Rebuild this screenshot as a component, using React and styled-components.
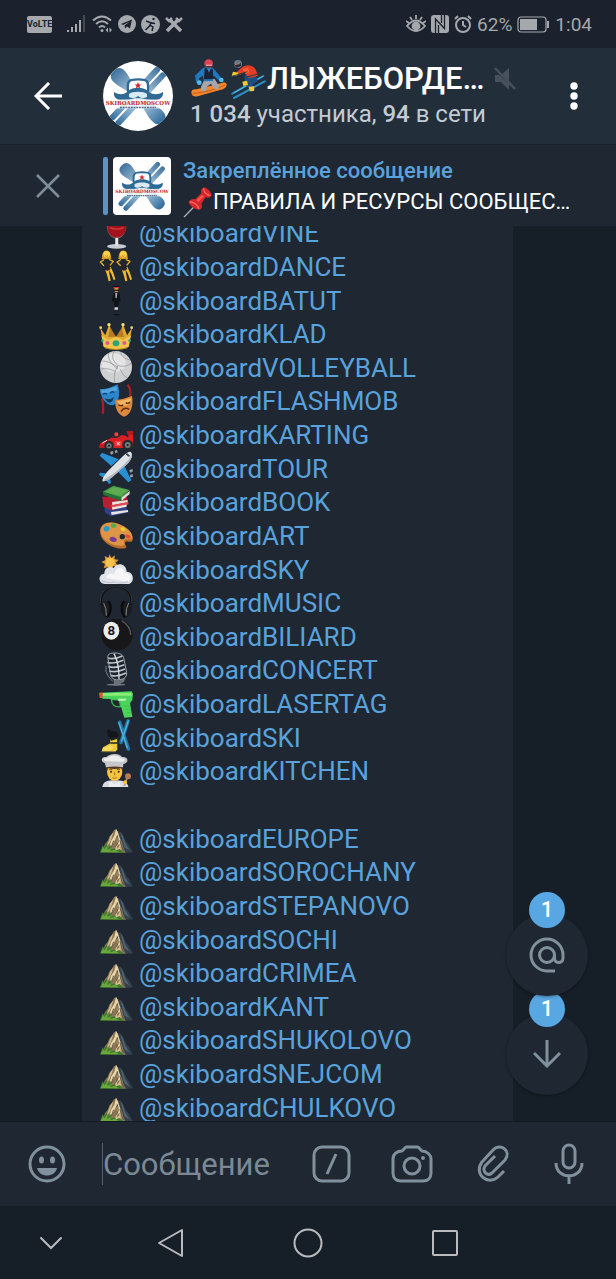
import styled, { createGlobalStyle, ThemeProvider } from "styled-components";

const theme = {
  colors: {
    status: "#1b222e",
    header: "#232e3b",
    panel: "#1e2732",
    bg: "#161e27",
    link: "#5aa2dc",
    badge: "#59a7e2",
    icon: "#80909c",
    system: "#a5a8ad",
    white: "#ffffff",
  },
};

const GlobalStyle = createGlobalStyle`
  * {
    box-sizing: border-box;
    margin: 0;
    padding: 0;
  }

  body {
    background: #161e27;
    font-family: Roboto, "Noto Sans", sans-serif;
  }

  button {
    border: none;
    background: none;
    font: inherit;
    cursor: pointer;
  }

  svg {
    display: block;
    flex: none;
  }

  a {
    text-decoration: none;
  }
`;

const Screen = styled.div`
  display: flex;
  flex-direction: column;
  height: 100vh;
  overflow: hidden;
`;

const StatusBar = styled.div`
  flex: none;
  display: flex;
  align-items: center;
  justify-content: space-between;
  height: 48px;
  padding: 0 24px 0 27px;
  background: ${({ theme }) => theme.colors.status};
  color: ${({ theme }) => theme.colors.system};
  font-size: 19px;
`;

const StatusGroup = styled.div`
  display: flex;
  align-items: center;
  gap: ${({ $gap }) => $gap}px;
`;

const Volte = styled.span`
  width: 25px;
  height: 17px;
  margin-right: 10px;
  border-radius: 2px;
  background: ${({ theme }) => theme.colors.system};
  color: ${({ theme }) => theme.colors.status};
  font-size: 9px;
  font-weight: 700;
  line-height: 17px;
  text-align: center;
`;

const Header = styled.header`
  flex: none;
  display: flex;
  align-items: center;
  height: 96px;
  padding: 0 24px 0 34px;
  background: ${({ theme }) => theme.colors.header};
  color: ${({ theme }) => theme.colors.white};
`;

const Avatar = styled.div`
  flex: none;
  width: 70px;
  height: 70px;
  margin: 0 17px 0 41px;
  border-radius: 50%;
  background: ${({ theme }) => theme.colors.white};
  overflow: hidden;
`;

const HeaderText = styled.div`
  flex: 1;
  min-width: 0;
  padding-bottom: 2px;
  white-space: nowrap;

  h1 {
    display: flex;
    align-items: center;
    height: 38px;
    font-size: 31px;
    font-weight: 500;
    line-height: 38px;
  }

  h1 span {
    margin-right: 10px;
  }

  p {
    color: #c3cbd3;
    font-size: 24px;
    line-height: 32px;
  }

  p b {
    font-weight: 500;
  }
`;

const Pinned = styled.section`
  position: relative;
  z-index: 1;
  flex: none;
  display: flex;
  align-items: center;
  height: 82px;
  padding: 0 34px 0 36px;
  border-top: 1px solid #1a222c;
  background: ${({ theme }) => theme.colors.panel};
`;

const PinnedLine = styled.div`
  flex: none;
  width: 5px;
  height: 58px;
  margin: 0 5px 0 43px;
  border-radius: 2px;
  background: #5a93c4;
`;

const Thumb = styled.div`
  flex: none;
  width: 58px;
  height: 58px;
  margin-right: 12px;
  border-radius: 4px;
  background: ${({ theme }) => theme.colors.white};
  overflow: hidden;
`;

const PinnedText = styled.div`
  min-width: 0;
  padding-top: 2px;
  font-size: 22px;
  line-height: 30px;
  white-space: nowrap;

  h2 {
    color: ${({ theme }) => theme.colors.link};
    font-size: 22px;
    font-weight: 500;
  }

  p {
    display: flex;
    align-items: center;
    color: ${({ theme }) => theme.colors.white};
  }
`;

const Chat = styled.main`
  position: relative;
  flex: 1;
  min-height: 0;
  display: flex;
  padding: 0 103px 0 82px;
  background: ${({ theme }) => theme.colors.bg};
  overflow: hidden;
`;

const Bubble = styled.ul`
  flex: 1;
  display: grid;
  grid-auto-rows: minmax(33px, 1fr);
  margin: -9px 0 -4px;
  padding: 0 17px;
  background: ${({ theme }) => theme.colors.panel};
  list-style: none;
`;

const Line = styled.li`
  display: flex;
  align-items: center;
  gap: 6px;
  font-size: 26px;
  line-height: 33px;

  svg {
    margin-bottom: 4px;
  }

  a {
    color: ${({ theme }) => theme.colors.link};
  }
`;

const Floating = styled.div`
  position: absolute;
  right: 28px;
  bottom: 26px;
  display: flex;
  flex-direction: column-reverse;
  gap: 17px;
`;

const RoundButton = styled.button`
  position: relative;
  display: grid;
  place-items: center;
  width: 82px;
  height: 82px;
  border-radius: 50%;
  background: ${({ theme }) => theme.colors.panel};
  box-shadow: 0 1px 3px rgba(0, 0, 0, 0.35);
  color: ${({ theme }) => theme.colors.icon};
`;

const Badge = styled.span`
  position: absolute;
  top: -22px;
  left: 23px;
  width: 36px;
  height: 36px;
  border-radius: 50%;
  background: ${({ theme }) => theme.colors.badge};
  color: ${({ theme }) => theme.colors.white};
  font-size: 22px;
  font-weight: 500;
  line-height: 36px;
  text-align: center;
`;

const Composer = styled.form`
  flex: none;
  display: flex;
  align-items: center;
  height: 85px;
  padding: 0 29px 0 27px;
  border-top: 1px solid #141a22;
  background: ${({ theme }) => theme.colors.panel};
  color: ${({ theme }) => theme.colors.icon};

  input {
    flex: 1;
    min-width: 0;
    height: 42px;
    margin-left: 35px;
    border: none;
    border-left: 1px solid #56616c;
    outline: none;
    background: none;
    color: ${({ theme }) => theme.colors.white};
    font-family: inherit;
    font-size: 31px;
  }

  input::placeholder {
    color: #7b8995;
    opacity: 1;
  }
`;

const Tools = styled.div`
  display: flex;
  gap: 38px;
`;

const NavBar = styled.nav`
  flex: none;
  display: flex;
  align-items: center;
  justify-content: space-between;
  height: 73px;
  padding: 0 156px 0 36px;
  background: ${({ theme }) => theme.colors.bg};
  color: #b9bbbe;
`;

const NavKeys = styled.div`
  display: flex;
  gap: 107px;
`;

const IconButton = styled.button`
  display: grid;
  place-items: center;
  flex: none;
  color: ${({ $color }) => $color || "inherit"};
`;

const Logo = ({ size }) => (
  <svg width={size} height={size} viewBox="0 0 70 70" aria-hidden="true">
    <defs>
      <linearGradient id="ski" x1="0" y1="0" x2="0" y2="1">
        <stop offset="0" stopColor="#3f719c" />
        <stop offset="0.25" stopColor="#7fa5c4" />
        <stop offset="0.5" stopColor="#d5e3ee" />
        <stop offset="0.75" stopColor="#7fa8c8" />
        <stop offset="1" stopColor="#2e6a9a" />
      </linearGradient>
    </defs>
    <g fill="url(#ski)">
      <path d="M35 0c8 0 9 6 7 14l-3 12v18l3 14c1 8 0 13-7 13s-8-5-7-13l3-14V26l-3-12c-2-8-1-14 7-14z" transform="rotate(-44 35 35)" />
      <rect x="28" y="0" width="6" height="71" rx="3" transform="rotate(43 35 35)" />
      <rect x="36" y="0" width="6" height="71" rx="3" transform="rotate(43 35 35)" />
    </g>
    <path d="M24 31c-1-9 0-12 4-13 5-1 10-1 14 0 4 1 5 4 4 13 4 3 9 3 14 0 1 6-5 9-11 8-5 0-9-2-14-2s-9 2-14 2c-6 1-11-2-10-8 5 3 9 3 13 0z" fill="#2e6a93" />
    <path d="M26 29c0-6 0-8 3-9q6-1 12 0c3 1 3 3 3 9-6-3-12-3-18 0z" fill="#fff" />
    <path d="M26 33c3-3 15-3 18 0v3c-3 2-7 1-9-1-2 2-6 3-9 1z" fill="#d8e9f2" />
    <path d="M35 21l1 2.500h2.500l-2 1.500.8 2.500-2.300-1.500-2.300 1.500.8-2.500-2-1.500h2.500z" fill="#d3252c" />
    <rect x="3" y="38.500" width="64" height="9" fill="#fff" opacity="0.75" />
    <text x="35" y="44" fill="#c5242f" fontFamily="DejaVu Serif" fontSize="5.500" fontWeight="700" textAnchor="middle">SKIBOARDMOSCOW</text>
    <path d="M17 46.500h36" stroke="#53718c" strokeWidth="1.500" strokeDasharray="2 .7" />
  </svg>
);

const Snowboarder = () => (
  <svg width="40" height="42" viewBox="0 0 120 126" aria-hidden="true">
    <path d="M4 103c0-8 8-11 16-9l76-19c10-4 18 3 12 11-4 5-9 8-15 9l-70 20c-10 3-19-2-19-12z" fill="#f2862d" />
    <path d="M8 106c30-1 69-12 97-25" stroke="#c85a1b" strokeWidth="3" fill="none" />
    <path d="M43 65l31-2 14 22-4 8-12-1-9-15-12 9-3 13-14 1-1-14z" fill="#a7a5aa" />
    <path d="M38 31c10-5 26-6 34 2l15 18 9 12-8 6-18-17-1 17-28 1-2-17-12 8 2 13-10 1-4-22z" fill="#1e79c0" />
    <path d="M44 31l24 2 2 30-28 1z" fill="#1a2234" />
    <path d="M51 31l6 13 6-13z" fill="#3289c7" />
    <circle cx="56" cy="17" r="13" fill="#dc4355" />
    <path d="M45 19h22v7l-11 5-11-5z" fill="#5a3841" />
    <path d="M47 19h19v5H47z" fill="#ef8e9a" />
    <circle cx="28" cy="74" r="7" fill="#57bce5" />
    <circle cx="94" cy="66" r="7" fill="#57bce5" />
  </svg>
);

const Skier = () => (
  <svg width="37" height="42" viewBox="0 0 111 126" aria-hidden="true">
    <path d="M7 107l93-53M12 120l92-50" stroke="#2491c6" strokeWidth="6" strokeLinecap="round" />
    <path d="M13 104l85-49" stroke="#79d3ed" strokeWidth="2" />
    <path d="M44 52l30-6 10 22-16 12 8 16-12 5-20-24z" fill="#1e4e83" />
    <path d="M34 29c12-11 32-10 42 3l8 22-28 6-12-16-16 7-8-8z" fill="#e53c23" />
    <path d="M37 33l16-4 6 13-12 6z" fill="#ff5f35" />
    <path d="M9 41l17 3-5 9H5zM37 71l14-3 3 13-14 3zM56 86l17-1-1 14-13 1z" fill="#f0cb25" />
    <path d="M4 56l48-15M50 57l45-12" stroke="#2b3c4b" strokeWidth="3" />
    <circle cx="24" cy="18" r="12" fill="#68788a" />
    <path d="M12 18l20-3 1 9-14 5z" fill="#232a35" />
    <path d="M15 19l14-2" stroke="#d99b76" strokeWidth="3" />
  </svg>
);

const PushPin = () => (
  <svg width="30" height="32" viewBox="0 0 90 96" aria-hidden="true">
    <path d="M39 56L4 92" stroke="#a9b0b6" strokeWidth="4" strokeLinecap="round" />
    <path d="M17 48c5-9 13-10 20-8l18-18c-2-8 0-15 7-18 12 2 23 14 24 24-4 8-11 8-18 6L55 53c4 10 1 16-6 18-14-1-30-11-32-23z" fill="#d7262c" />
    <path d="M20 48c11-1 24 8 28 21M62 8c-1 10 10 20 21 20" stroke="#ff665d" strokeWidth="4" fill="none" />
    <path d="M40 43l17-17 6 5-17 17z" fill="#f2574d" />
  </svg>
);

const Dancer = ({ x }) => (
  <g transform={`translate(${x} 0)`}>
    <path d="M10 26c0-24 26-26 27 0l1 7H9z" fill="#d99a1c" />
    <circle cx="24" cy="19" r="10" fill="#fbd24a" />
    <path d="M18 34L5 42l11 11M30 34l14 6-10 12" stroke="#e9ae2b" strokeWidth="4" fill="none" strokeLinejoin="round" />
    <path d="M18 62l7 18 5 20 6-2-4-22-2-15zM28 60l10 18 7 19 5-3-6-20-8-18z" fill="#f2b932" />
    <path d="M17 33l7 4 7-4 2 11-3 7 6 12-9 5-10-2 2-15-4-7z" fill="#23252c" />
    <path d="M20 23q4 4 8 0" stroke="#a04d26" strokeWidth="2" fill="none" />
  </g>
);

// Every drawing shares a 102 x 102 canvas.
const drawings = {
  wine: (
    <>
      <path d="M27 8h52c9 33-3 58-20 62v20H49V70C28 66 17 40 27 8z" fill="#8a6a70" />
      <path d="M26 28h54c4 23-8 38-27 39-19-1-31-16-27-39z" fill="#a3121c" />
      <path d="M32 38q21 9 42 0" stroke="#d03a34" strokeWidth="4" fill="none" />
      <ellipse cx="53" cy="94" rx="29" ry="7" fill="#c9ccd2" />
      <path d="M49 69h8v23h-8z" fill="#e5e7e9" />
    </>
  ),
  dance: (
    <>
      <Dancer x={-1} />
      <Dancer x={49} />
    </>
  ),
  levitate: (
    <>
      <path d="M43 12h18l2 5H41z" fill="#0d1014" />
      <path d="M43 15h18v4H43z" fill="#d32c34" />
      <circle cx="52" cy="24" r="7" fill="#d89a3c" />
      <path d="M44 23h16v4H44z" fill="#151719" />
      <path d="M44 32l8 5 9-5 4 24-6 4-2 17-10 1-2-18-7-3z" fill="#101215" />
      <path d="M49 33h6l-2 16-4-2z" fill="#a9afb3" />
      <path d="M47 76h10v7H46z" fill="#cdd0d4" />
      <ellipse cx="52" cy="98" rx="10" ry="2" fill="#0d1117" />
    </>
  ),
  crown: (
    <>
      <path d="M20 90l10-62 21 34 22-34 10 62z" fill="#b77a20" />
      <path d="M4 36l15 22 11-32 4 8-7 29 24-1 24 1-7-29 5-8 11 32 15-22-10 56c-21 10-54 10-75 0z" fill="#dfa832" />
      <path d="M7 58l21 14 23-10 22 10 23-14-7 34c-24 9-51 9-75 0z" fill="#f1c44c" />
      <circle cx="30" cy="26" r="5" fill="#f8dc73" />
      <circle cx="72" cy="26" r="5" fill="#f8dc73" />
      <circle cx="5" cy="35" r="4" fill="#f8dc73" />
      <circle cx="98" cy="35" r="4" fill="#f8dc73" />
      <ellipse cx="51" cy="82" rx="10" ry="9" fill="#2ba478" />
      <circle cx="25" cy="81" r="6" fill="#dd5a91" />
      <circle cx="76" cy="81" r="6" fill="#dd5a91" />
      <circle cx="10" cy="74" r="4" fill="#2ba478" />
      <circle cx="92" cy="74" r="4" fill="#2ba478" />
      <path d="M16 95q35 11 70 0" stroke="#c58d25" strokeWidth="3" fill="none" />
    </>
  ),
  volleyball: (
    <>
      <circle cx="51" cy="54" r="48" fill="#cfd0d1" />
      <ellipse cx="44" cy="42" rx="36" ry="29" fill="#e4e4e4" />
      <path d="M47 7c-11 12-7 28 10 43 14 4 27 1 40-7M29 12c-4 17 8 36 28 48M57 50c-10 15-14 32-9 50M8 36c18 0 34 8 49 20M4 60c17-3 32 0 47 9M64 60c5 14 14 24 22 28M66 9c-1 10 8 20 28 24" stroke="#8b8d8f" strokeWidth="2" fill="none" />
    </>
  ),
  masks: (
    <>
      <path d="M86 5q13 18 6 36M9 46q6 24 2 46" stroke="#a81e28" strokeWidth="7" fill="none" />
      <path d="M2 19c17 0 38-6 54-15 9 30 4 54-14 63C18 67 6 43 2 19z" fill="#2b86ca" />
      <path d="M6 20q24 0 46-11l3 13Q30 32 9 32z" fill="#6cb8e6" opacity="0.6" />
      <path d="M11 34q7-6 13 0M33 30q6-7 13-1" stroke="#123f70" strokeWidth="4" fill="none" />
      <path d="M18 46q15 7 27-4-5 17-14 17-8-1-13-13z" fill="#143657" />
      <path d="M50 51q27-3 49-12c5 27-3 58-24 62-21-8-29-31-25-50z" fill="#dd883c" />
      <path d="M54 55q22-2 42-10 0 17-13 22-20 3-29-12z" fill="#f2b765" />
      <path d="M58 65q8 6 15 0M80 59q7 5 13-2M66 86q9-16 25-7" stroke="#562f1c" strokeWidth="4" fill="none" />
    </>
  ),
  car: (
    <>
      <path d="M1 92l3-14 14-6 18-9 20-3 12-6 12 2 8 6V45h14v44l-12 4H23z" fill="#d91f24" />
      <path d="M82 42h21v12H86zM1 85h34v8H1z" fill="#ba1820" />
      <path d="M34 62l10-8 14-3 6 7-12 5z" fill="#3b2a31" />
      <circle cx="52" cy="52" r="6" fill="#e8453f" />
      <circle cx="30" cy="86" r="14" fill="#25272c" />
      <circle cx="86" cy="84" r="16" fill="#25272c" />
      <circle cx="30" cy="86" r="8" fill="#74777e" />
      <circle cx="86" cy="84" r="9" fill="#74777e" />
      <circle cx="30" cy="86" r="3" fill="#17191e" />
      <circle cx="86" cy="84" r="3" fill="#17191e" />
      <path d="M48 72h20v14H48z" fill="#f23e3a" />
      <path d="M56 76v9M63 76l-6 4 6 5M10 78l14-8" stroke="#f7dddd" strokeWidth="3" fill="none" />
    </>
  ),
  plane: (
    <>
      <path d="M59 28L9 8 2 17l35 31zM74 43l23 48-9 6-33-34zM20 70l-17-2-3 6 18 12zM33 84l3 15-6 3-13-17z" fill="#278fd2" />
      <path d="M95 6c8 6 3 20-7 33L38 82c-13 10-26 15-28 11 0-6 5-17 16-29l43-43C80 11 89 3 95 6z" fill="#dfe2e6" />
      <path d="M98 12c-2 13-22 33-48 54L13 91c7 5 17-1 28-10l44-39c10-12 17-23 13-30z" fill="#aeb6c0" />
      <path d="M84 9l10 9-6 2-8-7z" fill="#35485a" />
      <path d="M33 6l8-3 3 7-8 4zM47 2l7-2 2 7-7 3zM91 60l10-3v8l-8 3zM93 75l8-3 1 8-8 3z" fill="#9ba0a6" />
    </>
  ),
  books: (
    <>
      <path d="M16 68l62-5 12 22-54 12-18-12z" fill="#31418a" />
      <path d="M36 84l51-6v6l-49 9z" fill="#e6e3de" />
      <path d="M10 38l74 1 4 22-49 18-26-11z" fill="#b81e33" />
      <path d="M39 54l47-6v7L40 64zM39 69l44-9v8L40 77z" fill="#e9e3dc" />
      <path d="M36 64l52-10v7L38 70z" fill="#e14853" />
      <path d="M11 23L43 5l50 13-26 24z" fill="#469a48" />
      <path d="M11 23l56 17v12L13 33z" fill="#247238" />
      <path d="M67 41l25-20v9L68 50z" fill="#dedbd3" />
      <path d="M18 24L43 9l43 10-21 17z" fill="#5dad50" />
    </>
  ),
  palette: (
    <>
      <path d="M4 50C-2 22 27 9 57 20c28 9 48 29 44 50-3 11-21-3-23 7-1 8 9 13 1 17C49 99 9 79 4 50z" fill="#b66c2d" />
      <path d="M5 45C2 21 28 12 56 20c27 8 46 28 44 43-4 9-22-1-25 8-2 9 6 13-4 15C42 89 8 70 5 45z" fill="#dc9645" />
      <circle cx="70" cy="59" r="8" fill="#1e2732" />
      <path d="M15 41c-5-13 9-17 15-11 7 7-6 18-15 11z" fill="#239bcb" />
      <path d="M37 29c-5-10 9-12 14-6 5 8-9 13-14 6z" fill="#4cad49" />
      <path d="M65 38c-1-10 10-9 14-3 3 7-9 10-14 3z" fill="#eccd2e" />
      <path d="M31 67c2-12 17-9 22-1 4 10-16 14-22 1z" fill="#773b9e" />
      <path d="M77 57c3-8 17-4 18 4-1 6-16 3-18-4z" fill="#e84939" />
    </>
  ),
  cloud: (
    <>
      <path d="M32 10l5 11 10-8v12l12 1-9 9 8 11-15-1-6 14-9-11-14 4 4-13-11-6 12-6-2-12 11 5z" fill="#dd9a35" />
      <circle cx="33" cy="34" r="14" fill="#f5c34e" />
      <path d="M18 99C-4 99-3 69 16 68c0-17 15-25 28-17C55 32 82 38 83 62c24 0 25 37 2 37z" fill="#e1e3ea" />
      <path d="M21 80c6-17 17-13 24-9 7-29 31-22 32-4 19-4 25 18 8 25z" fill="#f6f6f8" />
      <path d="M8 88q10 10 37 5 17 7 42-1" stroke="#c5c8d4" strokeWidth="4" fill="none" />
    </>
  ),
  headphones: (
    <>
      <path d="M7 60C-5-15 109-15 96 60" stroke="#0c0e11" strokeWidth="6" fill="none" />
      <path d="M5 55C-5-14 108-14 98 55" stroke="#4b4e53" strokeWidth="2" fill="none" />
      <path d="M16 50c15-6 23 3 20 18 0 20-9 32-17 28C3 88-1 60 16 50zM87 50c-15-6-23 3-20 18 0 20 9 32 17 28 16-8 20-36 3-46z" fill="#1a1c1f" />
      <path d="M27 49c12 6 10 36-3 48M76 49c-12 6-10 36 3 48" stroke="#08090b" strokeWidth="6" fill="none" />
      <path d="M14 54q9 16 8 38M89 54q-9 16-8 38" stroke="#85878b" strokeWidth="3" fill="none" />
    </>
  ),
  eight: (
    <>
      <circle cx="54" cy="50" r="47" fill="#171719" />
      <path d="M68 8q28 17 27 43" stroke="#55555a" strokeWidth="4" fill="none" />
      <ellipse cx="37" cy="38" rx="24" ry="27" fill="#ececeb" />
      <text x="37" y="52" fontSize="40" fontWeight="700" textAnchor="middle" fill="#17191d">8</text>
    </>
  ),
  mic: (
    <>
      <ellipse cx="51" cy="98" rx="28" ry="3" fill="#777e86" />
      <path d="M43 80l37-5-5 15-15 7H45z" fill="#6b727a" />
      <path d="M23 22C21 0 64-5 74 15l10 48c2 24-41 30-48 9z" fill="#20242a" />
      <path d="M27 18q17 6 43-6M25 31q20 6 48-6M28 44q20 6 48-6M31 57q20 6 47-6M36 70q19 6 45-7" stroke="#bcc6cf" strokeWidth="5" fill="none" />
      <path d="M45 5q16 30 15 76" stroke="#d9dfe4" strokeWidth="4" fill="none" />
      <path d="M27 20q-5-17 18-17 24-1 29 14l9 44q2 19-20 22-22 3-28-12z" stroke="#9ca6b0" strokeWidth="3" fill="none" />
      <path d="M21 42v17l7 14 13 15" stroke="#79818a" strokeWidth="3" fill="none" />
    </>
  ),
  gun: (
    <>
      <path d="M5 20l93-4 4 7-2 19-7 10 7 41-24 2-12-40H46l-10-16-25-1-8-9z" fill="#4bd45b" />
      <path d="M8 22l88-2 3 9H12z" fill="#8bed77" />
      <path d="M0 20h11v16H2z" fill="#d95a38" />
      <path d="M37 40q2 26 28 22l-4-20z" fill="#1e2732" stroke="#40bc50" strokeWidth="4" />
      <path d="M57 38h26l-4 6H57z" fill="#baf4b4" />
      <path d="M76 60h15M79 70h15M82 80h15" stroke="#3cc04f" strokeWidth="3" />
    </>
  ),
  ski: (
    <>
      <path d="M87 6L66 70M62 10l26 80" stroke="#2277a8" strokeWidth="11" strokeLinecap="round" />
      <path d="M88 5L68 66M60 12l25 74" stroke="#4fb4dc" strokeWidth="4" strokeLinecap="round" />
      <path d="M32 45l22 5 1 42-7 6-40-1 4-12 22-12z" fill="#edc83a" />
      <path d="M24 36l7-6 4 5 18 3 5 9-4 13-18 5-8-14z" fill="#14171a" />
      <path d="M34 58h20M34 72h21" stroke="#22262a" strokeWidth="4" />
      <path d="M12 87l24-9 8 9-13 8H10z" fill="#f6dc62" />
      <path d="M7 98h43" stroke="#8a7a40" strokeWidth="3" />
    </>
  ),
  cook: (
    <>
      <path d="M10 102c2-17 17-20 36-20 20 0 40 3 42 20z" fill="#d9dce4" />
      <ellipse cx="47" cy="56" rx="23" ry="28" fill="#f4c33f" />
      <path d="M22 60V34h50v26l-5-14q-20 4-40 0z" fill="#4f3724" />
      <path d="M18 31C3 26 6 10 22 12 34 0 62 0 69 12c20-2 22 17 4 21l-1 10q-26-5-51 0z" fill="#c7c8cc" />
      <path d="M20 24C8 22 14 12 25 16c10-12 33-11 41 0 13-2 16 7 3 10z" fill="#eceded" />
      <path d="M31 50q5-3 9 0M54 50q5-3 9 0" stroke="#60401f" strokeWidth="3" fill="none" />
      <circle cx="36" cy="56" r="3" fill="#312820" />
      <circle cx="59" cy="56" r="3" fill="#312820" />
      <path d="M47 58v9M41 74q6 3 12 0" stroke="#a96e28" strokeWidth="3" fill="none" />
      <path d="M31 84l16 10 14-10 4 18H29z" fill="#eceef2" />
      <ellipse cx="87" cy="70" rx="9" ry="9" fill="#b97855" />
      <path d="M84 76l-8 22" stroke="#c98a60" strokeWidth="5" />
      <circle cx="78" cy="88" r="6" fill="#f4c33f" />
    </>
  ),
  mountain: (
    <>
      <path d="M53 32l12 3 7 11 9 18 9 12 12 21-22 2-24-6z" fill="#33414d" />
      <path d="M64 36l8 12 6 20 14 24-16-10z" fill="#526270" />
      <path d="M8 96l10-24 8-9 5-13 8-9 6-10 7-4 6 12 5 17 6 10 3 14 8 18z" fill="#8a7657" />
      <path d="M51 27l-5 20-10 16-5 20 9-8 9-17 4-12 3 21-4 14 9-10 7 18-4-30-5-13-3-11z" fill="#e8d5a8" />
      <path d="M43 37l-9 12-6 17-9 18 12-13 7-17z" fill="#cdb98b" />
      <path d="M55 46l3 18-7 17M44 62l-7 20M63 60l4 19 8 14" stroke="#65573f" strokeWidth="3" fill="none" />
      <path d="M46 96l6-20 4 10 6-12 6 22z" fill="#d4c08e" />
      <path d="M3 98l7-22 6 6 8-14 2 15 9-8 1 14 10-4 6 6 10-4 12 11z" fill="#3f7a2c" />
      <path d="M5 96l8-14 4 6 9-14-1 17 10-8-1 11 14-5 12 8z" fill="#6aa83e" />
    </>
  ),
};

const Emoji = ({ name }) => (
  <svg width="34" height="34" viewBox="0 0 102 102" aria-hidden="true">
    {drawings[name]}
  </svg>
);

const lines = [
  ["wine", "VINE"],
  ["dance", "DANCE"],
  ["levitate", "BATUT"],
  ["crown", "KLAD"],
  ["volleyball", "VOLLEYBALL"],
  ["masks", "FLASHMOB"],
  ["car", "KARTING"],
  ["plane", "TOUR"],
  ["books", "BOOK"],
  ["palette", "ART"],
  ["cloud", "SKY"],
  ["headphones", "MUSIC"],
  ["eight", "BILIARD"],
  ["mic", "CONCERT"],
  ["gun", "LASERTAG"],
  ["ski", "SKI"],
  ["cook", "KITCHEN"],
  [],
  ["mountain", "EUROPE"],
  ["mountain", "SOROCHANY"],
  ["mountain", "STEPANOVO"],
  ["mountain", "SOCHI"],
  ["mountain", "CRIMEA"],
  ["mountain", "KANT"],
  ["mountain", "SHUKOLOVO"],
  ["mountain", "SNEJCOM"],
  ["mountain", "CHULKOVO"],
];

const StatusIcons = () => (
  <StatusGroup $gap={5}>
    <Volte>VoLTE</Volte>
    <svg width="20" height="18" viewBox="0 0 20 18" fill="currentColor">
      <path d="M0 15h2v2H0zM4 12h2v5H4zM8 9h2v8H8zM12 5h2v12h-2z" />
      <path d="M16 0h2v17h-2z" opacity="0.3" />
    </svg>
    <svg width="21" height="18" viewBox="0 0 21 18" fill="none" stroke="currentColor" strokeWidth="2">
      <path d="M1 5.500q9-8 18 0M4 9q6-5.500 12 0M7 12.500q3-3 6 0" />
      <circle cx="10" cy="15.500" r="1.500" fill="currentColor" stroke="none" />
      <path d="M13.500 15l2.500-2.500v5zM17.500 12.500v5l2.500-2.500z" fill="currentColor" stroke="none" />
    </svg>
    <svg width="18" height="18" viewBox="0 0 18 18">
      <circle cx="9" cy="9" r="9" fill="currentColor" />
      <path d="M3 9l11-4.500-2 9-3-2-2 2-.5-3L12 6.500l-7 3.500z" fill="#1b222e" />
    </svg>
    <svg width="19" height="19" viewBox="0 0 19 19">
      <circle cx="9.500" cy="9.500" r="9.500" fill="currentColor" />
      <circle cx="12.500" cy="4" r="1.200" fill="#1b222e" />
      <path d="M5 6l4 1.500 5 1M10.500 7l-2 4-4 4M9 10l3 2-1 4" stroke="#1b222e" strokeWidth="1.500" fill="none" />
    </svg>
    <svg width="18" height="18" viewBox="0 0 18 18" stroke="currentColor" fill="none">
      <path d="M5 5l11 11M13 5L2 16" strokeWidth="3.500" />
      <path d="M1 3l3 3 3-3M11 3l3 3 3-3" strokeWidth="2.500" />
    </svg>
  </StatusGroup>
);

const SystemIcons = () => (
  <StatusGroup $gap={5}>
    <svg width="20" height="18" viewBox="0 0 20 18" fill="none" stroke="currentColor" strokeWidth="1.800">
      <path d="M1 11q9-11 18 0-9 10-18 0z" />
      <circle cx="10" cy="11" r="3.500" fill="currentColor" />
      <path d="M10 0v4M4 2l2 3M16 2l-2 3M0 6l3 2M20 6l-3 2" />
    </svg>
    <svg width="18" height="18" viewBox="0 0 18 18">
      <rect width="18" height="18" rx="3" fill="currentColor" />
      <path d="M4.500 18V4l9 9.500V0" stroke="#1b222e" strokeWidth="1.300" fill="none" />
      <path d="M7.500 10v8M10.500 0v8" stroke="#1b222e" strokeWidth="1.300" />
    </svg>
    <svg width="18" height="18" viewBox="0 0 18 18" fill="none" stroke="currentColor" strokeWidth="2">
      <circle cx="9" cy="10" r="7" />
      <path d="M9 6v4l3 2M1 4l3-3M17 4l-3-3" />
    </svg>
    <span>62%</span>
    <svg width="33" height="17" viewBox="0 0 33 17">
      <rect x="1" y="1" width="28" height="15" rx="3" fill="none" stroke="currentColor" strokeWidth="1.200" />
      <path d="M3 3h17v11H3z" fill="currentColor" />
      <path d="M31 5v7" stroke="currentColor" strokeWidth="2" />
    </svg>
    <span>1:04</span>
  </StatusGroup>
);

const App = () => {
  return (
    <ThemeProvider theme={theme}>
      <GlobalStyle />
      <Screen>
        <StatusBar>
          <StatusIcons />
          <SystemIcons />
        </StatusBar>

        <Header>
          <IconButton aria-label="Назад">
            <svg width="28" height="28" viewBox="0 0 28 28" fill="none" stroke="currentColor" strokeWidth="3">
              <path d="M28 14H3M15 1L2 14l13 13" />
            </svg>
          </IconButton>
          <Avatar>
            <Logo size={70} />
          </Avatar>
          <HeaderText>
            <h1>
              <Snowboarder />
              <Skier />
              <span>ЛЫЖЕБОРДЕ…</span>
              <svg width="22" height="24" viewBox="0 0 22 24" fill="#46515d">
                <path d="M1 8h4l10 9v6l-8-8H1zM15 1v13L8 7z" />
                <path d="M1 1l20 21" stroke="#46515d" strokeWidth="2.500" />
              </svg>
            </h1>
            <p>
              <b>1 034</b> участника, <b>94</b> в сети
            </p>
          </HeaderText>
          <IconButton aria-label="Меню">
            <svg width="36" height="28" viewBox="0 0 36 28" fill="currentColor">
              <circle cx="18" cy="4" r="3.700" />
              <circle cx="18" cy="14" r="3.700" />
              <circle cx="18" cy="24" r="3.700" />
            </svg>
          </IconButton>
        </Header>

        <Pinned>
          <IconButton aria-label="Закрыть" $color="#7f8d98">
            <svg width="24" height="24" viewBox="0 0 24 24" fill="none" stroke="currentColor" strokeWidth="2.500">
              <path d="M1 1l22 22M23 1L1 23" />
            </svg>
          </IconButton>
          <PinnedLine />
          <Thumb>
            <Logo size={58} />
          </Thumb>
          <PinnedText>
            <h2>Закреплённое сообщение</h2>
            <p>
              <PushPin />
              ПРАВИЛА И РЕСУРСЫ СООБЩЕС…
            </p>
          </PinnedText>
        </Pinned>

        <Chat>
          <Bubble>
            {lines.map(([emoji, name], index) => (
              <Line key={index}>
                {name && (
                  <>
                    <Emoji name={emoji} />
                    <a href={`#skiboard${name}`}>@skiboard{name}</a>
                  </>
                )}
              </Line>
            ))}
          </Bubble>
          <Floating>
            <RoundButton aria-label="Вниз">
              <svg width="28" height="28" viewBox="0 0 28 28" fill="none" stroke="currentColor" strokeWidth="3">
                <path d="M14 0v26M1 13l13 13 13-13" />
              </svg>
              <Badge>1</Badge>
            </RoundButton>
            <RoundButton aria-label="Упоминания">
              <svg width="36" height="36" viewBox="0 0 36 36" fill="none" stroke="currentColor" strokeWidth="3">
                <circle cx="18" cy="18" r="7.500" />
                <path d="M25.500 18v3c0 6 8.500 6 8.500 0v-3A16 16 0 1 0 18 34h8" />
              </svg>
              <Badge>1</Badge>
            </RoundButton>
          </Floating>
        </Chat>

        <Composer onSubmit={(e) => e.preventDefault()}>
          <IconButton type="button" aria-label="Эмодзи">
            <svg width="40" height="38" viewBox="0 0 40 38">
              <circle cx="20" cy="19" r="17" fill="none" stroke="currentColor" strokeWidth="3" />
              <ellipse cx="14.500" cy="15" rx="2.500" ry="3.500" fill="currentColor" />
              <ellipse cx="25.500" cy="15" rx="2.500" ry="3.500" fill="currentColor" />
              <path d="M10 23h20c-2 10-18 10-20 0z" fill="currentColor" />
            </svg>
          </IconButton>
          <input type="text" aria-label="Сообщение" placeholder="Сообщение" autoComplete="off" />
          <Tools>
            <IconButton type="button" aria-label="Команды">
              <svg width="42" height="40" viewBox="0 0 42 40" fill="none" stroke="currentColor" strokeWidth="3">
                <rect x="3" y="3" width="35" height="34" rx="8" />
                <path d="M25 10l-9 20" />
              </svg>
            </IconButton>
            <IconButton type="button" aria-label="Камера">
              <svg width="42" height="40" viewBox="0 0 42 40" fill="none" stroke="currentColor" strokeWidth="3">
                <path d="M15 3h12l4 4c5 0 9 4 9 8v14c0 5-3 8-8 8H10c-5 0-8-3-8-8V15c0-5 4-8 9-8z" strokeLinejoin="round" />
                <circle cx="21" cy="22" r="8" />
                <circle cx="32" cy="14" r="2" fill="currentColor" stroke="none" />
              </svg>
            </IconButton>
            <IconButton type="button" aria-label="Прикрепить">
              <svg width="42" height="40" viewBox="0 0 42 40" fill="none" stroke="currentColor" strokeWidth="3">
                <path d="M33 27l-6 6c-10 9-25-3-16-15L22 6c7-8 19 1 12 10L21 29c-5 4-10-2-7-7l10-10" />
              </svg>
            </IconButton>
            <IconButton type="button" aria-label="Голосовое сообщение">
              <svg width="36" height="42" viewBox="-2 0 36 42" fill="none" stroke="currentColor" strokeWidth="3">
                <rect x="10" y="2" width="12" height="23" rx="6" />
                <path d="M3 20c0 17 26 17 26 0M16 33v8" />
              </svg>
            </IconButton>
          </Tools>
        </Composer>

        <NavBar>
          <IconButton aria-label="Скрыть">
            <svg width="30" height="30" viewBox="0 0 30 30" fill="none" stroke="currentColor" strokeWidth="2" strokeLinecap="round">
              <path d="M5 10l10 10 10-10" />
            </svg>
          </IconButton>
          <NavKeys>
            <IconButton aria-label="Назад в систему">
              <svg width="30" height="30" viewBox="0 0 30 30" fill="none" stroke="currentColor" strokeWidth="2" strokeLinejoin="round">
                <path d="M26 2v26L3 15z" />
              </svg>
            </IconButton>
            <IconButton aria-label="Домой">
              <svg width="30" height="30" viewBox="0 0 30 30" fill="none" stroke="currentColor" strokeWidth="2">
                <circle cx="15" cy="15" r="13.500" />
              </svg>
            </IconButton>
            <IconButton aria-label="Недавние">
              <svg width="30" height="30" viewBox="0 0 30 30" fill="none" stroke="currentColor" strokeWidth="2">
                <rect x="3" y="3" width="24" height="24" rx="1" />
              </svg>
            </IconButton>
          </NavKeys>
        </NavBar>
      </Screen>
    </ThemeProvider>
  );
};

export default App;
